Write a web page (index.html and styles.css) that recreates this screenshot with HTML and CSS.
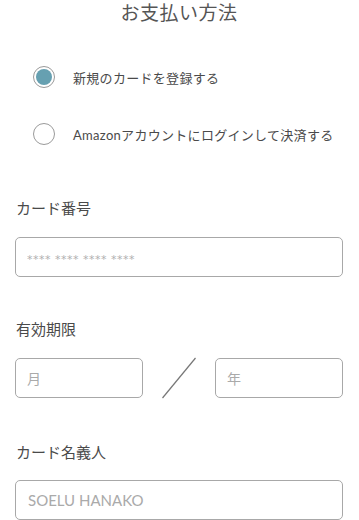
FILE: index.html
```html
<!DOCTYPE html>
<html lang="ja">
<head>
<meta charset="utf-8">
<link rel="stylesheet" href="styles.css">
</head>
<body>
<div class="page">
  <h1 class="title">お支払い方法</h1>
  <div class="options">
    <label class="option">
      <span class="radio checked"></span>
      <span class="option-text">新規のカードを登録する</span>
    </label>
    <label class="option option-second">
      <span class="radio"></span>
      <span class="option-text">Amazonアカウントにログインして決済する</span>
    </label>
  </div>

  <div class="field field-card">
    <div class="label">カード番号</div>
    <input class="input input-card" type="text" placeholder="**** **** **** ****">
  </div>

  <div class="field field-exp">
    <div class="label">有効期限</div>
    <div class="exp-row">
      <input class="input input-half" type="text" placeholder="月">
      <div class="slash">
        <svg width="36" height="42" viewBox="0 0 36 42"><line x1="1.5" y1="41" x2="34.5" y2="1" stroke="#777" stroke-width="1.2"/></svg>
      </div>
      <input class="input input-half" type="text" placeholder="年">
    </div>
  </div>

  <div class="field field-name">
    <div class="label">カード名義人</div>
    <input class="input input-name" type="text" placeholder="SOELU HANAKO">
  </div>
</div>
</body>
</html>
```
FILE: styles.css
```css
* { box-sizing: border-box; }
html, body { margin: 0; padding: 0; background: #fff; }
body {
  font-family: Lato, "Noto Sans CJK JP", sans-serif;
  color: #4a4a4a;
  overflow: hidden;
}
.page {
  padding: 0 16px 0 15px;
}
.title {
  margin: 0;
  height: 26px;
  line-height: 26px;
  font-size: 19px;
  font-weight: 400;
  letter-spacing: 0.5px;
  text-align: center;
  color: #555;
}
.options {
  margin-top: 40px;
  padding-left: 18px;
}
.option {
  display: flex;
  align-items: center;
  height: 22px;
}
.option-second {
  margin-top: 35px;
}
.radio {
  width: 22px;
  height: 22px;
  border-radius: 50%;
  border: 1px solid #9a9a9a;
  background: #fff;
  flex: none;
  position: relative;
}
.radio.checked::after {
  content: "";
  position: absolute;
  left: 2px;
  top: 2px;
  width: 16px;
  height: 16px;
  border-radius: 50%;
  background: #66a0b1;
}
.option-text {
  margin-left: 18px;
  font-size: 13px;
  letter-spacing: 0.3px;
  color: #4a4a4a;
}
.label {
  height: 22px;
  line-height: 22px;
  font-size: 15px;
  color: #4a4a4a;
  padding-left: 1px;
}
.field-card { margin-top: 52px; }
.field-exp { margin-top: 41px; }
.field-name { margin-top: 43px; }
.input {
  display: block;
  width: 100%;
  height: 40px;
  margin-top: 18px;
  border: 1px solid #a8a8a8;
  border-radius: 5px;
  padding: 0 0 0 11px;
  font-family: Lato, "Noto Sans CJK JP", sans-serif;
  font-size: 14px;
  color: #444;
  background: #fff;
  outline: none;
}
.input::placeholder { color: #aaa; }
.input-card::placeholder {
  font-family: "DejaVu Sans", sans-serif;
  font-size: 11px;
  letter-spacing: 0.5px;
  color: #b0b0b0;
}
.field-name .input { margin-top: 17px; }
.input-name {
  padding-left: 12px;
  font-size: 15px;
}
.exp-row {
  display: flex;
  align-items: center;
  margin-top: 18px;
}
.exp-row .input { margin-top: 0; }
.input-half {
  width: 128px;
  flex: none;
}
.slash {
  flex: 1;
  display: flex;
  justify-content: center;
  align-items: center;
  height: 40px;
}
```
